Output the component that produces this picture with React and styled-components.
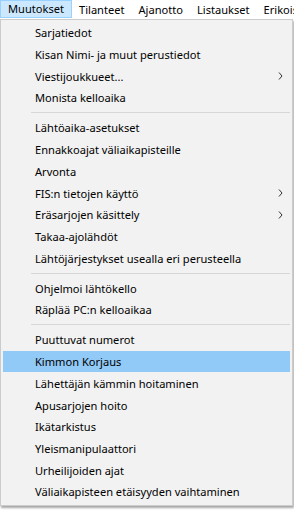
import React from 'react';
import styled, { createGlobalStyle } from 'styled-components';

const GlobalStyle = createGlobalStyle`
    html, body {
        margin: 0;
        padding: 0;
        background: #ffffff;
    }
    body {
        font-family: "Noto Sans", "Open Sans", sans-serif;
        font-size: 11.1px;
        color: #000;
    }
`

const Window = styled.div`
    width: 294px;
    height: 511px;
    overflow: hidden;
    background: #ffffff;
`

const MenuBar = styled.div`
    display: flex;
    height: 19px;
    background: #ffffff;
    white-space: nowrap;
    font-size: 11.1px;
`

const BarItem = styled.div`
    display: flex;
    align-items: center;
    padding: 0 ${p => (p.active ? '7px' : '6px')} 1px;
    height: ${p => (p.active ? '18px' : '19px')};
    box-sizing: border-box;
    border: 1px solid ${p => (p.active ? '#99d1ff' : 'transparent')};
    background: ${p => (p.active ? '#cce8ff' : 'transparent')};
`

const Dropdown = styled.div`
    width: 293px;
    box-sizing: border-box;
    border: 1px solid #cccccc;
    background: #f2f2f2;
    padding: 2px;
    box-shadow: 1px 2px 2px rgba(0, 0, 0, 0.35);
`

const Item = styled.div`
    display: flex;
    align-items: center;
    height: 21.7px;
    padding-left: 32px;
    padding-right: 7px;
    white-space: nowrap;
    background: ${p => (p.selected ? '#91c9f7' : 'transparent')};
`

const Label = styled.span`
    flex: 1;
`

const Separator = styled.div`
    height: 8.4px;
    display: flex;
    align-items: center;
    padding-left: 28px;

    &::after {
        content: '';
        flex: 1;
        height: 1px;
        background: #d7d7d7;
    }
`

const Arrow = () => (
    <svg width="5" height="8" viewBox="0 0 5 8">
        <path d="M1 0.5 L4 4 L1 7.5" fill="none" stroke="#333" strokeWidth="1" />
    </svg>
)

const bar = ['Muutokset', 'Tilanteet', 'Ajanotto', 'Listaukset', 'Erikoistoiminnot']

const items = [
    { label: 'Sarjatiedot' },
    { label: 'Kisan Nimi- ja muut perustiedot' },
    { label: 'Viestijoukkueet...', sub: true },
    { label: 'Monista kelloaika' },
    { sep: true },
    { label: 'Lähtöaika-asetukset' },
    { label: 'Ennakkoajat väliaikapisteille' },
    { label: 'Arvonta' },
    { label: 'FIS:n tietojen käyttö', sub: true },
    { label: 'Eräsarjojen käsittely', sub: true },
    { label: 'Takaa-ajolähdöt' },
    { label: 'Lähtöjärjestykset usealla eri perusteella' },
    { sep: true },
    { label: 'Ohjelmoi lähtökello' },
    { label: 'Räplää PC:n kelloaikaa' },
    { sep: true },
    { label: 'Puuttuvat numerot' },
    { label: 'Kimmon Korjaus', selected: true },
    { label: 'Lähettäjän kämmin hoitaminen' },
    { label: 'Apusarjojen hoito' },
    { label: 'Ikätarkistus' },
    { label: 'Yleismanipulaattori' },
    { label: 'Urheilijoiden ajat' },
    { label: 'Väliaikapisteen etäisyyden vaihtaminen' },
]

const App = () => {
    return (
        <Window>
            <GlobalStyle />
            <MenuBar>
                {bar.map((b, i) => (
                    <BarItem key={b} active={i === 0}>{b}</BarItem>
                ))}
            </MenuBar>
            <Dropdown>
                {items.map((it, i) =>
                    it.sep ? (
                        <Separator key={i} />
                    ) : (
                        <Item key={i} selected={it.selected}>
                            <Label>{it.label}</Label>
                            {it.sub && <Arrow />}
                        </Item>
                    )
                )}
            </Dropdown>
        </Window>
    )
}

export default App
